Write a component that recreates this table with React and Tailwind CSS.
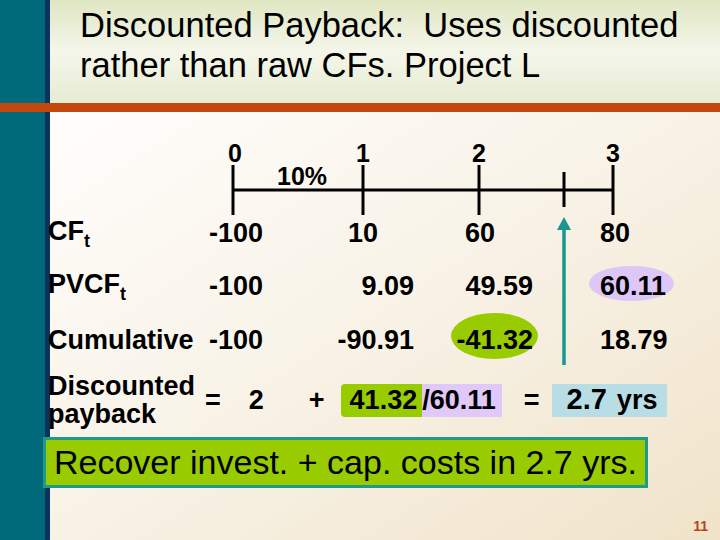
import React from "react";

const FONT = "font-['Liberation_Sans',Arial,sans-serif]";

/* timeline drawing: coordinates relative to the body content (x=50, y=112) */
const Timeline = () => (
  <svg width="670" height="94" className="block overflow-visible">
    <g fill="#000" fontFamily="'Liberation Sans', Arial, sans-serif" fontWeight="700" fontSize="25">
      <text x="185" y="50" textAnchor="middle">0</text>
      <text x="313" y="50" textAnchor="middle">1</text>
      <text x="429" y="50" textAnchor="middle">2</text>
      <text x="563" y="50" textAnchor="middle">3</text>
      <text x="227" y="73">10%</text>
    </g>
    <g stroke="#000" strokeWidth="3">
      <line x1="183" y1="78" x2="563" y2="78" />
      <line x1="183" y1="53" x2="183" y2="103" />
      <line x1="313" y1="53" x2="313" y2="103" />
      <line x1="429" y1="53" x2="429" y2="103" />
      <line x1="514" y1="60" x2="514" y2="95" />
      <line x1="563" y1="53" x2="563" y2="103" />
    </g>
  </svg>
);

const Arrow = () => (
  <svg
    width="16"
    height="150"
    className="absolute left-[506px] top-[105px]"
  >
    <polygon points="8,0 1,13 15,13" fill="#16988f" />
    <line x1="8" y1="12" x2="8" y2="148" stroke="#16988f" strokeWidth="3.5" />
  </svg>
);

const Row = ({ label, c0, c1, c2, c3, h = "h-[53px]" }) => (
  <div className={`flex items-center ${h} -ml-[2px] leading-[30px]`}>
    <div className="w-[159px]">{label}</div>
    <div className="w-[56px] text-right">{c0}</div>
    <div className="w-[151px] text-right">{c1}</div>
    <div className="w-[119px] text-right">{c2}</div>
    <div className="pl-[67px]">{c3}</div>
  </div>
);

// subscript t, nudged down without growing the line box
const Sub = ({ children }) => (
  <span className="relative top-[7px] text-[18px]">{children}</span>
);

export default function App() {
  return (
    <div className={`w-[720px] h-[540px] flex flex-col overflow-hidden text-black ${FONT}`}>
      {/* HEADER */}
      <div className="flex h-[103px]">
        <div className="w-[45px] bg-[#006a7a]" />
        <div className="w-[5px] bg-[#0c3360]" />
        <div className="flex-1 bg-linear-to-b from-[#dfe6c2] via-[#f5f6ea] to-[#e7ebd2] pl-[30px] pt-[5px] text-[34.5px] leading-[40px]">
          <p>Discounted Payback:&nbsp; Uses discounted</p>
          <p>rather than raw CFs. Project L</p>
        </div>
      </div>
      <div className="h-[9px] bg-[#c4480e]" />

      {/* BODY */}
      <div className="flex flex-1">
        <div className="w-[45px] bg-[#006a7a]" />
        <div className="w-[5px] bg-[#0c3360]" />
        <div className="flex-1 relative flex flex-col bg-linear-to-br from-[#fffefc] via-[#f8f2e6] to-[#f0e3c9] text-[27px] font-bold">
          <Timeline />
          <Arrow />

          <Row
            label={<>CF<Sub>t</Sub></>}
            c0="-100"
            c1={<span className="pr-[36px]">10</span>}
            c2={<span className="pr-[38px]">60</span>}
            c3="80"
          />
          <Row
            label={<>PVCF<Sub>t</Sub></>}
            c0="-100"
            c1="9.09"
            c2="49.59"
            c3={
              <span className="inline-block bg-[#ddc7f7] rounded-[50%] pl-[11px] pr-[8px] -ml-[11px] -mr-[8px] pt-[5px] -mt-[5px]">
                60.11
              </span>
            }
          />
          <Row
            h="h-[55px]"
            label="Cumulative"
            c0="-100"
            c1="-90.91"
            c2={
              <span className="inline-block bg-[#99cc00] rounded-[50%] px-[5px] -mx-[5px] pt-[12px] pb-[4px] -mt-[12px] -mb-[4px]">
                -41.32
              </span>
            }
            c3="18.79"
          />

          {/* discounted payback formula */}
          <div className="flex items-center -ml-[2px] pt-[5px]">
            <div className="w-[157px] leading-[28px]">
              <p>Discounted</p>
              <p>payback</p>
            </div>
            <span>=</span>
            <span className="ml-[28px]">2</span>
            <span className="ml-[45px]">+</span>
            <div className="ml-[16px] flex h-[33px] items-center">
              <span className="h-full flex items-center bg-[#99cc00] pl-[9px] pr-[5px] rounded-l-[4px]">41.32</span>
              <span className="h-full flex items-center bg-[#e0c8f8] pr-[6px]">/60.11</span>
            </div>
            <span className="ml-[22px]">=</span>
            <div className="ml-[12px] h-[33px] w-[115px] flex items-center bg-[#b9dde5] pl-[15px]">
              <span className="text-[29px]">2.7</span>
              <span className="ml-[10px]">yrs</span>
            </div>
          </div>

          {/* conclusion */}
          <div className="mt-[9px] -ml-[7px] w-[605px] h-[51px] flex items-center border-[3px] border-[#20998a] bg-[#99cc00] pl-[8px] text-[34px] font-normal">
            Recover invest. + cap. costs in 2.7 yrs.
          </div>

          <div className="mt-auto self-end pr-[12px] pb-[6px] text-[14px] leading-[15px] text-[#b5451b]">
            11
          </div>
        </div>
      </div>
    </div>
  );
}
